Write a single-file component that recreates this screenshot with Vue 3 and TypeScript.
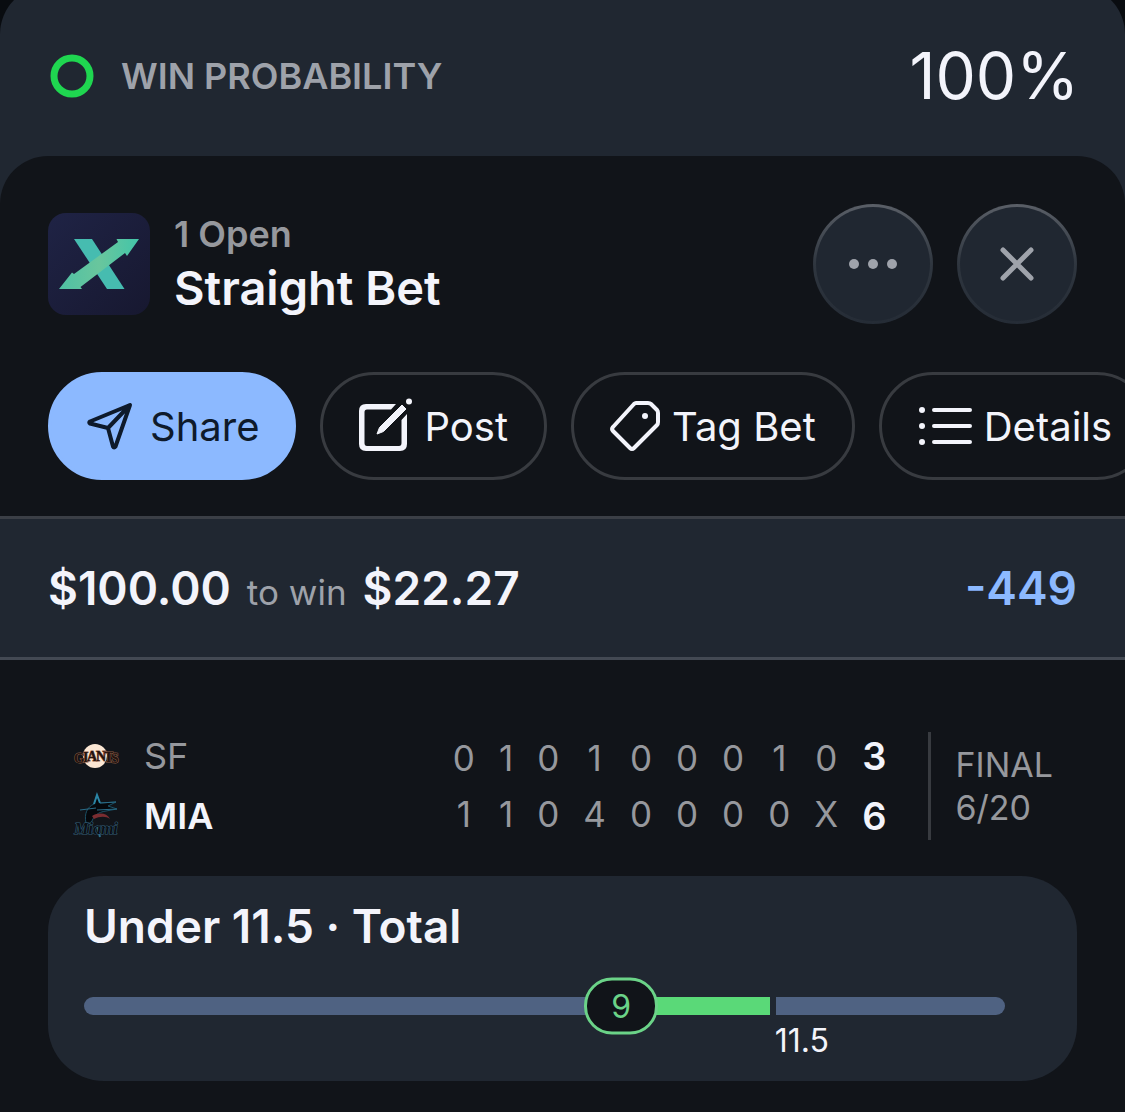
<script setup lang="ts">
interface TeamLine {
  id: string
  innings: string[]
  total: number
  winner: boolean
}

const teams: TeamLine[] = [
  { id: 'SF', innings: ['0', '1', '0', '1', '0', '0', '0', '1', '0'], total: 3, winner: false },
  { id: 'MIA', innings: ['1', '1', '0', '4', '0', '0', '0', '0', 'X'], total: 6, winner: true },
]

const line = 11.5
const current = 9
// The line always sits three quarters of the way along the track.
const rest = line / 3
</script>

<template>
  <main class="page">
    <header class="probability">
      <svg class="ring" viewBox="0 0 44 44" aria-hidden="true">
        <circle cx="22" cy="22" r="18" />
      </svg>
      <span class="probability-label">WIN PROBABILITY</span>
      <span class="probability-value">100%</span>
    </header>

    <div class="backdrop">
      <section class="sheet">
        <div class="bet-head">
          <svg class="book-logo" viewBox="0 0 102 102" aria-hidden="true">
            <defs>
              <linearGradient id="tile" x1="0" y1="0" x2="1" y2="1">
                <stop offset="0" stop-color="#1f2345" />
                <stop offset="1" stop-color="#171830" />
              </linearGradient>
              <linearGradient id="arrow" x1="0" y1="0" x2="1" y2="0">
                <stop offset="0" stop-color="#4fc0a4" />
                <stop offset=".5" stop-color="#69c69d" />
                <stop offset="1" stop-color="#43c5a9" />
              </linearGradient>
            </defs>
            <rect width="102" height="102" rx="18" fill="url(#tile)" />
            <path d="M26 26H44L76.500 76H59Z" fill="#46bcb0" />
            <path d="M91 26H68.500L70 29L26 61L24 59.500L11 76H34L32.500 74L77 40L79 43Z" fill="url(#arrow)" />
          </svg>
          <div class="bet-title">
            <p class="bet-status">1 Open</p>
            <h1 class="bet-name">Straight Bet</h1>
          </div>
          <button class="round" type="button" aria-label="More">
            <svg viewBox="0 0 60 60" aria-hidden="true">
              <g fill="#9fa3ab">
                <circle cx="11" cy="30" r="5" />
                <circle cx="30" cy="30" r="5" />
                <circle cx="49" cy="30" r="5" />
              </g>
            </svg>
          </button>
          <button class="round" type="button" aria-label="Close">
            <svg viewBox="0 0 60 60" aria-hidden="true">
              <path d="M16 16L44 44M44 16L16 44" fill="none" stroke="#9fa3ab" stroke-width="5" stroke-linecap="round" />
            </svg>
          </button>
        </div>

        <nav class="actions">
          <button class="action primary" type="button">
            <svg class="action-icon share" viewBox="0 0 46 48" aria-hidden="true">
              <path d="M43 3L3 19.500Q1.500 20.500 3 21.500L21 26L26 44.500Q27 46.500 28.500 44.500ZM43 3L21 26" fill="none" stroke="currentColor" stroke-width="4" stroke-linejoin="round" />
            </svg>
            Share
          </button>
          <button class="action" type="button">
            <svg class="action-icon post" viewBox="0 0 54 54" aria-hidden="true">
              <path d="M37 5L32 10.500H8Q5.500 10.500 5.500 13V44Q5.500 47 8 47H40Q42.500 47 42.500 44V21L48 15V45Q48 52 41 52H7Q0 52 0 45V12Q0 5 7 5Z" fill="currentColor" />
              <path d="M18 35L20.500 28.500L43 6L47 10L24.500 32.500Z" fill="currentColor" stroke="currentColor" stroke-width="1" stroke-linejoin="round" />
              <circle cx="50" cy="2.500" r="3" fill="currentColor" />
            </svg>
            Post
          </button>
          <button class="action" type="button">
            <svg class="action-icon tag" viewBox="0 0 50 50" aria-hidden="true">
              <path d="M26 2H38Q40 2 41 3L47 9Q48 10 48 12V21Q48 23 47 24L24 47Q22 49 20 47L3 30Q1 28 3 26L24 3Q25 2 26 2Z" fill="none" stroke="currentColor" stroke-width="4" stroke-linejoin="round" />
              <circle cx="35" cy="15" r="3" fill="currentColor" />
            </svg>
            Tag Bet
          </button>
          <button class="action" type="button">
            <svg class="action-icon list" viewBox="0 0 54 40" aria-hidden="true">
              <g fill="currentColor">
                <circle cx="4" cy="4" r="3" />
                <circle cx="4" cy="20" r="3" />
                <circle cx="4" cy="36" r="3" />
              </g>
              <path d="M16 4H52M16 20H52M16 36H52" stroke="currentColor" stroke-width="4" stroke-linecap="round" />
            </svg>
            Details
          </button>
        </nav>

        <div class="stake">
          <strong>$100.00</strong>
          <span class="to-win">to win</span>
          <strong>$22.27</strong>
          <strong class="odds">-449</strong>
        </div>

        <div class="game">
          <table class="score">
            <tbody>
              <tr v-for="team in teams" :key="team.id" :class="{ winner: team.winner }">
                <td class="team-logo">
                  <svg v-if="team.id === 'SF'" viewBox="0 0 48 48" aria-hidden="true">
                    <circle cx="23" cy="24" r="12" fill="#fbe6d3" />
                    <text class="wordmark giants" x="2 11 15 24 32 39" y="31 30 29 29 30 31">GIANTS</text>
                  </svg>
                  <svg v-else viewBox="0 0 48 48" aria-hidden="true">
                    <path d="M14 31C12 22 15 15 22 12L25 3L28 11L44 10L36 14L45 17L34 19C26 20 21 24 19 32Z" fill="#05080c" stroke="#1b5166" stroke-width="1" />
                    <path d="M22 12L25 3L28 11" fill="none" stroke="#2b86a6" stroke-width="2" />
                    <path d="M28 11L44 10M8 18L24 16M25 18L45 17" fill="none" stroke="#2a6c88" stroke-width="1" />
                    <path d="M20 24C27 20 35 21 38 27C34 24 28 24 22 27Z" fill="#7a2d31" />
                    <path d="M25 34L28 45" stroke="#2b6f8c" stroke-width="2" />
                    <text class="wordmark miami" x="24" y="42">Miami</text>
                  </svg>
                </td>
                <th class="team-name" scope="row">{{ team.id }}</th>
                <td v-for="(runs, i) in team.innings" :key="i" class="inning">{{ runs }}</td>
                <td class="total">{{ team.total }}</td>
              </tr>
            </tbody>
          </table>
          <div class="status">
            <span>FINAL</span>
            <span>6/20</span>
          </div>
        </div>

        <section class="pick">
          <h2 class="pick-name">Under 11.5 · Total</h2>
          <div class="track">
            <div class="segment" :style="{ flexGrow: current }"></div>
            <div class="segment live" :style="{ flexGrow: line - current }">
              <span class="marker">{{ current }}</span>
            </div>
            <div class="segment after" :style="{ flexGrow: rest }"></div>
          </div>
          <div class="scale">
            <span class="scale-cell" :style="{ flexGrow: line }"></span>
            <span class="scale-cell" :style="{ flexGrow: rest }">{{ line }}</span>
          </div>
        </section>
      </section>
    </div>
  </main>
</template>

<style>
body {
  margin: 0;
  background: #090c10;
}
</style>

<style scoped>
.page {
  overflow: hidden;
  font-family: Inter, "Liberation Sans", sans-serif;
  color: #f3f4fb;
}

p,
h1,
h2 {
  margin: 0;
}

.probability {
  display: flex;
  align-items: center;
  margin-top: -14px;
  padding: 50px 46px 40px 50px;
  border-radius: 48px 48px 0 0;
  background: #202731;
}

.ring {
  width: 44px;
  height: 44px;
  margin-right: 27px;
  fill: none;
  stroke: #1fd650;
  stroke-width: 7px;
}

.probability-label {
  flex: 1;
  font-size: 36px;
  font-weight: 600;
  color: #9ea2aa;
}

.probability-value {
  font-size: 64px;
  line-height: 80px;
}

.backdrop {
  background: #202731;
}

.sheet {
  padding: 48px 0 32px;
  border-radius: 48px 48px 0 0;
  background: #111419;
}

.bet-head {
  display: flex;
  align-items: center;
  gap: 24px;
  padding: 0 48px;
}

.book-logo {
  flex: none;
  width: 102px;
  height: 102px;
}

.bet-title {
  flex: 1;
}

.bet-status {
  font-size: 36px;
  line-height: 48px;
  font-weight: 600;
  color: #96989d;
}

.bet-name {
  font-size: 47px;
  line-height: 60px;
  font-weight: 600;
}

.round {
  display: flex;
  align-items: center;
  justify-content: center;
  width: 120px;
  height: 120px;
  padding: 0;
  border: 3px solid transparent;
  border-radius: 50%;
  background:
    linear-gradient(#202731, #202731) padding-box,
    linear-gradient(#5a5f67, #2f363f 50%, #252c36) border-box;
}

.round svg {
  width: 60px;
  height: 60px;
}

.actions {
  display: flex;
  gap: 24px;
  padding: 48px 48px 36px;
  overflow: hidden;
}

.action {
  flex: none;
  display: flex;
  align-items: center;
  height: 108px;
  padding: 0 36px;
  border: 3px solid #383b40;
  border-radius: 54px;
  background: none;
  color: #f3f4fb;
  font-family: inherit;
  font-size: 40px;
}

.primary {
  padding-right: 33px;
  border-color: #8cb9ff;
  background: #8cb9ff;
  color: #0e1a2b;
}

.action-icon {
  flex: none;
  margin-right: 12px;
}

.share {
  width: 46px;
  height: 48px;
  margin-right: 17px;
}

.post {
  width: 54px;
  height: 54px;
  overflow: visible;
}

.tag {
  width: 50px;
  height: 50px;
}

.list {
  width: 54px;
  height: 40px;
}

.stake {
  display: flex;
  align-items: baseline;
  gap: 16px;
  padding: 40px 48px;
  border-top: 3px solid #3b3f46;
  border-bottom: 3px solid #434953;
  background: #202731;
  font-size: 46px;
  line-height: 58px;
}

.stake strong {
  font-weight: 600;
}

.stake .to-win {
  font-size: 35px;
  line-height: 40px;
  color: #9ea2aa;
}

.stake .odds {
  margin-left: auto;
  color: #8cb9ff;
}

.game {
  display: flex;
  align-items: center;
  padding: 66px 72px 30px;
}

.score {
  flex: 1;
  border-collapse: collapse;
  font-size: 38px;
}

.score tr {
  height: 60px;
}

.score td,
.score th {
  padding: 0;
}

.team-logo svg {
  display: block;
  width: 48px;
  height: 48px;
}

.wordmark {
  font-family: "Liberation Serif", serif;
  font-weight: 700;
  stroke-width: 1px;
  paint-order: stroke;
}

.giants {
  font-size: 14px;
  fill: #24130e;
  stroke: #8a5a44;
}

.miami {
  font-size: 16px;
  font-style: italic;
  text-anchor: middle;
  fill: #0a0f15;
  stroke: #35607a;
}

.score .team-name {
  width: 100%;
  padding-left: 24px;
  text-align: left;
  font-size: 36px;
  font-weight: 400;
  color: #96989d;
}

.score .winner .team-name {
  font-weight: 600;
  color: #f3f4fb;
}

.score .inning {
  padding: 0 12px;
  vertical-align: bottom;
  text-align: center;
  font-size: 35px;
  line-height: 56px;
  color: #96989d;
}

.score .winner .inning {
  vertical-align: top;
}

.score .total {
  padding: 0 42px 0 12px;
  text-align: center;
  font-weight: 600;
}

.status {
  display: flex;
  flex-direction: column;
  padding: 11px 0;
  padding-left: 24px;
  border-left: 3px solid #383b40;
  font-size: 34px;
  line-height: 43px;
  color: #96989d;
}

.pick {
  margin: 0 48px;
  padding: 20px 72px 20px 36px;
  border-radius: 56px;
  background: #202731;
}

.pick-name {
  font-size: 46px;
  line-height: 60px;
  font-weight: 600;
}

.track {
  display: flex;
  height: 18px;
  margin-top: 41px;
}

.segment {
  flex-basis: 0;
  border-radius: 9px 0 0 9px;
  background: #4f6282;
}

.live {
  position: relative;
  border-radius: 0;
  background: #5ad978;
}

.after {
  margin-left: 6px;
  border-radius: 0 9px 9px 0;
}

.marker {
  position: absolute;
  top: 50%;
  left: 0;
  box-sizing: border-box;
  width: 74px;
  height: 57px;
  border: 3px solid #6bd388;
  border-radius: 28px;
  background: #111419;
  color: #6bd388;
  font-size: 32px;
  line-height: 52px;
  text-align: center;
  transform: translate(-50%, -50%);
}

.scale {
  display: flex;
  margin-top: 6px;
  font-size: 32px;
  line-height: 40px;
}

.scale-cell {
  flex-basis: 0;
}
</style>
